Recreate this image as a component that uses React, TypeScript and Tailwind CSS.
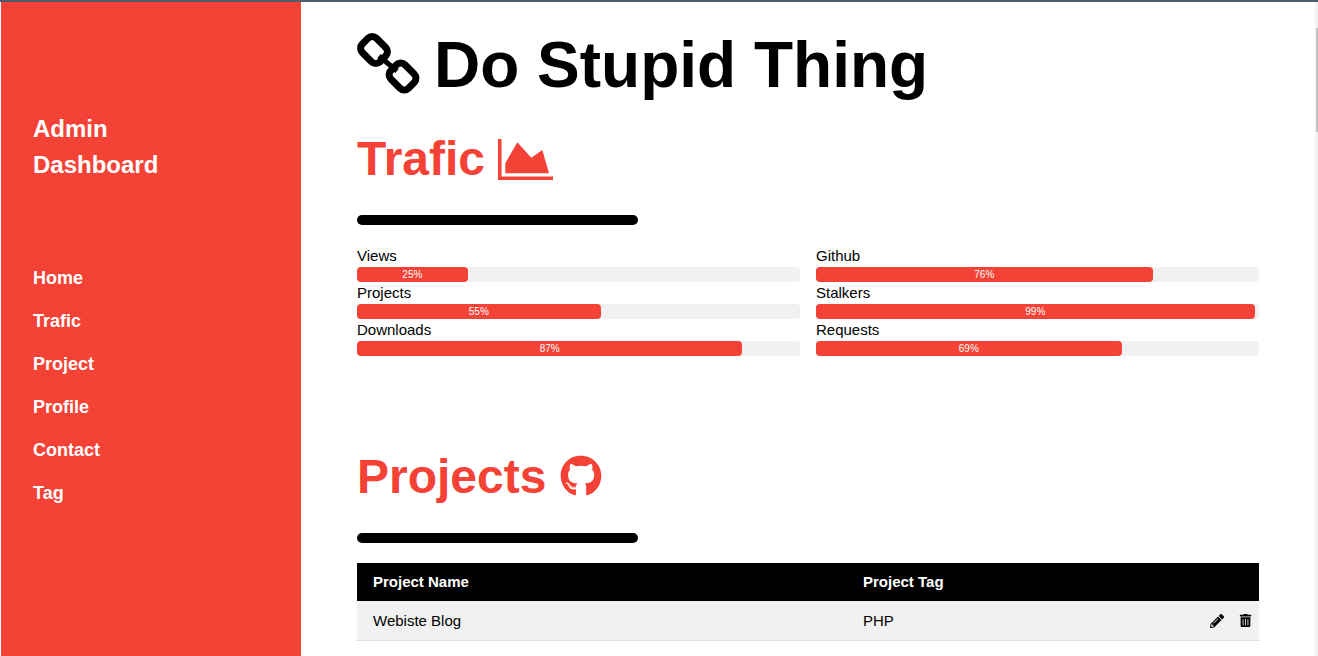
import React from 'react';
import { FaGithub, FaPencilAlt, FaTrashAlt } from 'react-icons/fa';

const navLinks = ['Home', 'Trafic', 'Project', 'Profile', 'Contact', 'Tag'];

const leftStats = [
  { label: 'Views', value: 25 },
  { label: 'Projects', value: 55 },
  { label: 'Downloads', value: 87 },
];

const rightStats = [
  { label: 'Github', value: 76 },
  { label: 'Stalkers', value: 99 },
  { label: 'Requests', value: 69 },
];

const ChainIcon: React.FC = () => (
  <svg viewBox="3 4 58 58" className="mr-[19px] mb-[2px] h-[58px] w-[58px] shrink-0 overflow-visible" fill="none" stroke="currentColor">
    <rect x="7.5" y="9" width="25" height="20" rx="6" strokeWidth="7" transform="rotate(45 20 19)" />
    <rect x="36" y="35.5" width="25" height="20" rx="6" strokeWidth="7" transform="rotate(45 48.5 45.5)" />
    <path d="M25 25L43 40" strokeWidth="5" />
  </svg>
);

const AreaIcon: React.FC = () => (
  <svg viewBox="0 0 55 41" className="ml-[13px] h-[41px] w-[55px] shrink-0" fill="currentColor">
    <path d="M0 0H3.5V37.5H55V41H0Z" />
    <path d="M7.3 24.3L19.3 3.3L33.3 18.7L44.3 11L51 34.3H7.3Z" />
  </svg>
);

const StatBar: React.FC<{ label: string; value: number }> = ({ label, value }) => (
  <div>
    <div className="h-[22px] text-[15px] leading-[22px] text-black">{label}</div>
    <div className="h-[15px] rounded-[4px] bg-[#f1f1f1]">
      <div
        className="h-full rounded-[4px] bg-[#f44336] text-center text-[10px] leading-[15px] text-white"
        style={{ width: `${value}%` }}
      >
        {value}%
      </div>
    </div>
  </div>
);

const App: React.FC = () => {
  return (
    <div className="flex h-screen flex-col overflow-hidden bg-white font-['Liberation_Sans',sans-serif]">
      <div className="h-[2px] shrink-0 bg-[#4c5f6b]" />
      <div className="flex min-h-0 flex-1">
        <aside className="ml-[1px] w-[300px] shrink-0 bg-[#f44336] px-8 pt-[109px] text-white">
          <h1 className="text-2xl leading-9 font-bold">
            Admin
            <br />
            Dashboard
          </h1>
          <nav className="mt-[85px] flex flex-col gap-[22px]">
            {navLinks.map((link) => (
              <a key={link} className="text-lg leading-[21px] font-bold">
                {link}
              </a>
            ))}
          </nav>
        </aside>

        <main className="min-w-0 flex-1 px-14">
          <h1 className="mt-[26px] flex items-center text-[64px] leading-[74px] font-bold text-black">
            <ChainIcon />
            Do Stupid Thing
          </h1>

          <h2 className="mt-[29px] flex h-[56px] items-center text-5xl font-bold text-[#f44336]">
            Trafic
            <AreaIcon />
          </h2>
          <div className="mt-[28px] h-[10px] w-[281px] rounded-full bg-black" />

          <div className="mt-[20px] grid grid-cols-2 gap-x-4">
            <div>
              {leftStats.map((s) => (
                <StatBar key={s.label} {...s} />
              ))}
            </div>
            <div>
              {rightStats.map((s) => (
                <StatBar key={s.label} {...s} />
              ))}
            </div>
          </div>

          <h2 className="mt-[93px] flex h-[56px] items-center text-5xl font-bold text-[#f44336]">
            Projects
            <FaGithub className="mb-[2px] ml-[14px] text-[42px]" />
          </h2>
          <div className="mt-[28px] h-[10px] w-[281px] rounded-full bg-black" />

          <table className="mt-5 w-full border-collapse text-[15px] text-black">
            <thead>
              <tr className="h-[38px] bg-black text-left text-white">
                <th className="w-[506px] pl-4 font-bold">Project Name</th>
                <th className="font-bold">Project Tag</th>
                <th className="w-[100px]" />
              </tr>
            </thead>
            <tbody>
              <tr className="h-[39px] border-b border-[#dddddd] bg-[#f1f1f1]">
                <td className="pt-[2px] pl-4">Webiste Blog</td>
                <td className="pt-[2px]">PHP</td>
                <td className="pt-[2px]">
                  <div className="flex justify-end gap-[15px] pr-[7px] text-[14px]">
                    <FaPencilAlt />
                    <FaTrashAlt className="text-[13px]" />
                  </div>
                </td>
              </tr>
            </tbody>
          </table>
        </main>

        <div className="w-[3px] shrink-0 bg-[#f1f1f1] pt-[26px]">
          <div className="ml-[1px] h-[104px] w-[2px] bg-[#c1c1c1]" />
        </div>
      </div>
    </div>
  );
};

export default App;
